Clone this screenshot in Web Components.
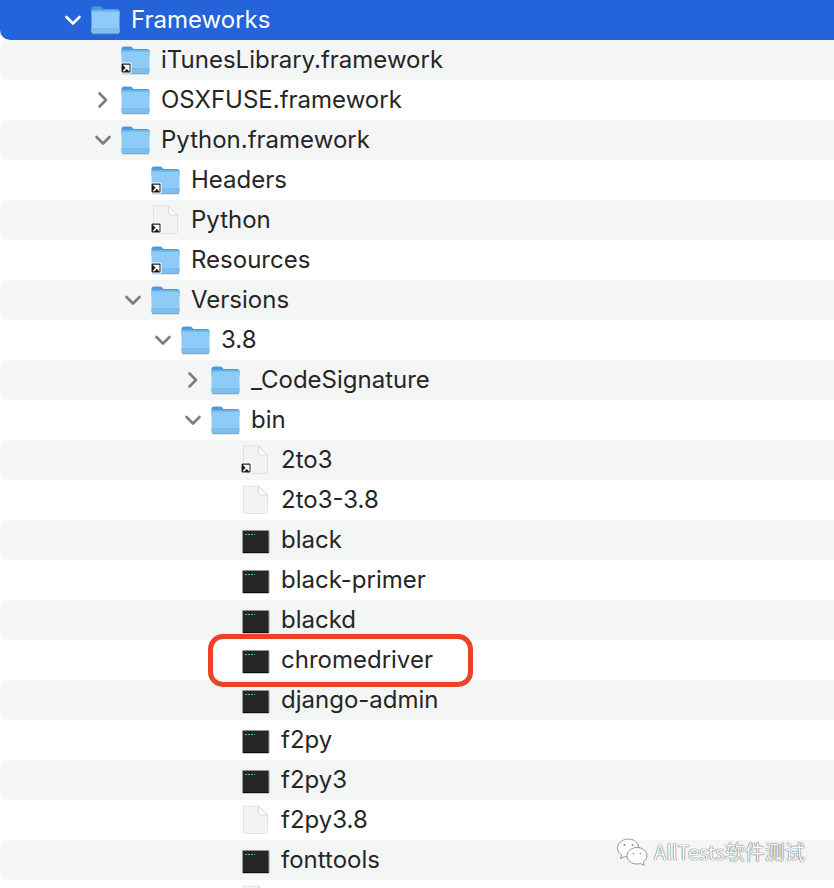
<!DOCTYPE html>
<html lang="en">
<head>
<meta charset="utf-8">
<title>Finder list</title>
<style>
  html, body { margin: 0; padding: 0; background: #fff; }
  body { width: 834px; height: 888px; overflow: hidden; position: relative; font-family: Inter, "Noto Sans CJK SC", sans-serif; }
</style>
</head>
<body>
<finder-tree id="tree">
  <tree-row depth="0" icon="folder" open selected>Frameworks</tree-row>
  <tree-row depth="1" icon="folder" alias>iTunesLibrary.framework</tree-row>
  <tree-row depth="1" icon="folder" closed>OSXFUSE.framework</tree-row>
  <tree-row depth="1" icon="folder" open>Python.framework</tree-row>
  <tree-row depth="2" icon="folder" alias>Headers</tree-row>
  <tree-row depth="2" icon="file" alias>Python</tree-row>
  <tree-row depth="2" icon="folder" alias>Resources</tree-row>
  <tree-row depth="2" icon="folder" open>Versions</tree-row>
  <tree-row depth="3" icon="folder" open>3.8</tree-row>
  <tree-row depth="4" icon="folder" closed>_CodeSignature</tree-row>
  <tree-row depth="4" icon="folder" open>bin</tree-row>
  <tree-row depth="5" icon="file" alias>2to3</tree-row>
  <tree-row depth="5" icon="file">2to3-3.8</tree-row>
  <tree-row depth="5" icon="exec">black</tree-row>
  <tree-row depth="5" icon="exec">black-primer</tree-row>
  <tree-row depth="5" icon="exec">blackd</tree-row>
  <tree-row depth="5" icon="exec">chromedriver</tree-row>
  <tree-row depth="5" icon="exec">django-admin</tree-row>
  <tree-row depth="5" icon="exec">f2py</tree-row>
  <tree-row depth="5" icon="exec">f2py3</tree-row>
  <tree-row depth="5" icon="file">f2py3.8</tree-row>
  <tree-row depth="5" icon="exec">fonttools</tree-row>
  <tree-row depth="5" icon="file"></tree-row>
</finder-tree>
<red-mark></red-mark>
<wechat-mark>AllTests软件测试</wechat-mark>

<script>
const aliasArrow = `
  <g>
    <rect x="0.5" y="18.5" width="11" height="11" rx="1.5" fill="#fff"/>
    <rect x="1.5" y="19.5" width="9" height="9" rx="1" fill="#1c1c1c"/>
    <path d="M3.4 27.2 L7.4 23 M4.6 21.6 H8.7 V25.7 Z" stroke="#fff" stroke-width="1.6" fill="#fff"/>
  </g>`;

const icons = {
  folder: `
    <path d="M1.5 5.5 Q1.5 2.5 4 2.5 H10 Q11.5 2.5 12.5 3.8 L13.5 5 H27 Q29.5 5 29.5 7.5 V12 H1.5 Z" fill="#4a9be0"/>
    <rect x="1.5" y="6.5" width="28" height="23" rx="1.8" fill="#8ecbf6"/>
    <rect x="1.5" y="6.5" width="28" height="1.2" fill="#6fb5ec"/>
    <rect x="1.5" y="24" width="28" height="1" fill="#7ab9ea"/>
    <path d="M1.5 25 H29.5 V27.7 Q29.5 29.5 27.7 29.5 H3.3 Q1.5 29.5 1.5 27.7 Z" fill="#7dbfef"/>
    <rect x="2" y="29.3" width="27" height="0.9" fill="#7a98b0"/>`,
  file: `
    <path d="M3.5 2 H18.5 L27.5 11 V27 Q27.5 29.5 25 29.5 H6 Q3.5 29.5 3.5 27 Z" fill="#f3f3f3" stroke="#dcdcdc" stroke-width="0.8"/>
    <path d="M18.5 2 V9 Q18.5 11 20.5 11 H27.5 Z" fill="#fcfcfc" stroke="#d4d4d4" stroke-width="0.8"/>`,
  exec: `
    <rect x="2" y="6" width="27.5" height="23.5" rx="1" fill="#8e99a4"/>
    <rect x="3" y="7" width="25.5" height="21.5" fill="#262626"/>
    <rect x="3" y="28" width="25.5" height="1" fill="#0c0c0c"/>
    <path d="M5 10.5 H7 M8 10.5 H10 M11 10.5 H13 M14 10.5 H15" stroke="#5fc15f" stroke-width="1.2"/>`
};

class FinderTree extends HTMLElement {
  constructor() {
    super();
    this.attachShadow({ mode: 'open' }).innerHTML = `
      <style>
        :host { display: flex; flex-direction: column; width: 834px; }
      </style>
      <slot></slot>`;
  }
}

class TreeRow extends HTMLElement {
  constructor() {
    super();
    this.attachShadow({ mode: 'open' });
  }

  connectedCallback() {
    const depth = Number(this.getAttribute('depth'));
    const icon = this.getAttribute('icon');
    const alias = this.hasAttribute('alias') ? aliasArrow : '';
    let chevron = '';
    if (this.hasAttribute('open')) chevron = '<path d="M2.5 6 L9 12.5 L15.5 6"/>';
    if (this.hasAttribute('closed')) chevron = '<path d="M5.5 2.5 L12 9 L5.5 15.5"/>';
    this.shadowRoot.innerHTML = `
      <style>
        :host {
          display: flex;
          align-items: center;
          flex: none;
          height: 40px;
          padding-left: calc(64px + ${depth} * 30px);
          box-sizing: border-box;
          border-radius: 10px 0 0 10px;
          font: 400 24px/40px Inter, "Noto Sans", sans-serif;
          color: #262626;
          letter-spacing: var(--track, 0);
          white-space: nowrap;
        }
        :host(:nth-child(even)) { background: #f4f5f5; }
        :host([selected]) { background: #2463d9; color: #fff; border-radius: 0 0 0 10px; }
        .chev { width: 18px; height: 18px; flex: none; fill: none; stroke: #7d7d7d; stroke-width: 2.6; stroke-linecap: round; stroke-linejoin: round; }
        :host([selected]) .chev { stroke: #fff; }
        .icon { width: 31px; height: 31px; margin-left: 8px; flex: none; margin-top: -1px; }
        .name { margin-left: 10px; }
      </style>
      <svg class="chev" viewBox="0 0 18 18">${chevron}</svg>
      <svg class="icon" viewBox="0 0 31 31">${icons[icon]}${alias}</svg>
      <span class="name"><slot></slot></span>`;
  }
}

class RedMark extends HTMLElement {
  constructor() {
    super();
    this.attachShadow({ mode: 'open' }).innerHTML = `
      <style>
        :host {
          position: absolute; left: 208px; top: 634px;
          width: 265px; height: 53px; box-sizing: border-box;
          border: 5px solid #ee4129; border-radius: 15px;
        }
      </style>`;
  }
}

class WechatMark extends HTMLElement {
  constructor() {
    super();
    this.attachShadow({ mode: 'open' }).innerHTML = `
      <style>
        :host {
          position: absolute; left: 616px; top: 837px;
          display: flex; align-items: center; gap: 6px;
          font: 400 20px/30px "Noto Sans CJK SC", sans-serif;
          color: #fdfdfd;
          text-shadow: 0 0 1px #555, 0 0 1px #555;
          white-space: nowrap;
        }
        svg { width: 32px; height: 30px; flex: none; }
      </style>
      <svg viewBox="0 0 32 30" fill="#fff" stroke="#8a8a8a" stroke-width="0.9">
        <path d="M12.5 2 C6.5 2 1.5 6 1.5 11 C1.5 14 3 16.3 5.5 18 L4.5 21.5 L8.5 19.5 C9.5 19.7 10.5 20 11 20 C14 20 24 14 22.5 9 C21 4.5 17 2 12.5 2 Z"/>
        <path d="M21 10.5 C15.5 10.5 11 14.2 11 18.7 C11 23.2 15.5 27 21 27 C22.3 27 23.4 26.8 24.5 26.4 L28 28.5 L27.2 25 C29.6 23.4 31 21.2 31 18.7 C31 14.2 26.5 10.5 21 10.5 Z"/>
        <circle cx="8.5" cy="8" r="1" fill="#888" stroke="none"/>
        <circle cx="16.5" cy="8" r="1" fill="#888" stroke="none"/>
        <circle cx="17.5" cy="16.5" r="0.8" fill="#888" stroke="none"/>
        <circle cx="24.5" cy="16.5" r="0.8" fill="#888" stroke="none"/>
      </svg>
      <slot></slot>`;
  }
}

customElements.define('finder-tree', FinderTree);
customElements.define('tree-row', TreeRow);
customElements.define('red-mark', RedMark);
customElements.define('wechat-mark', WechatMark);
</script>
</body>
</html>
